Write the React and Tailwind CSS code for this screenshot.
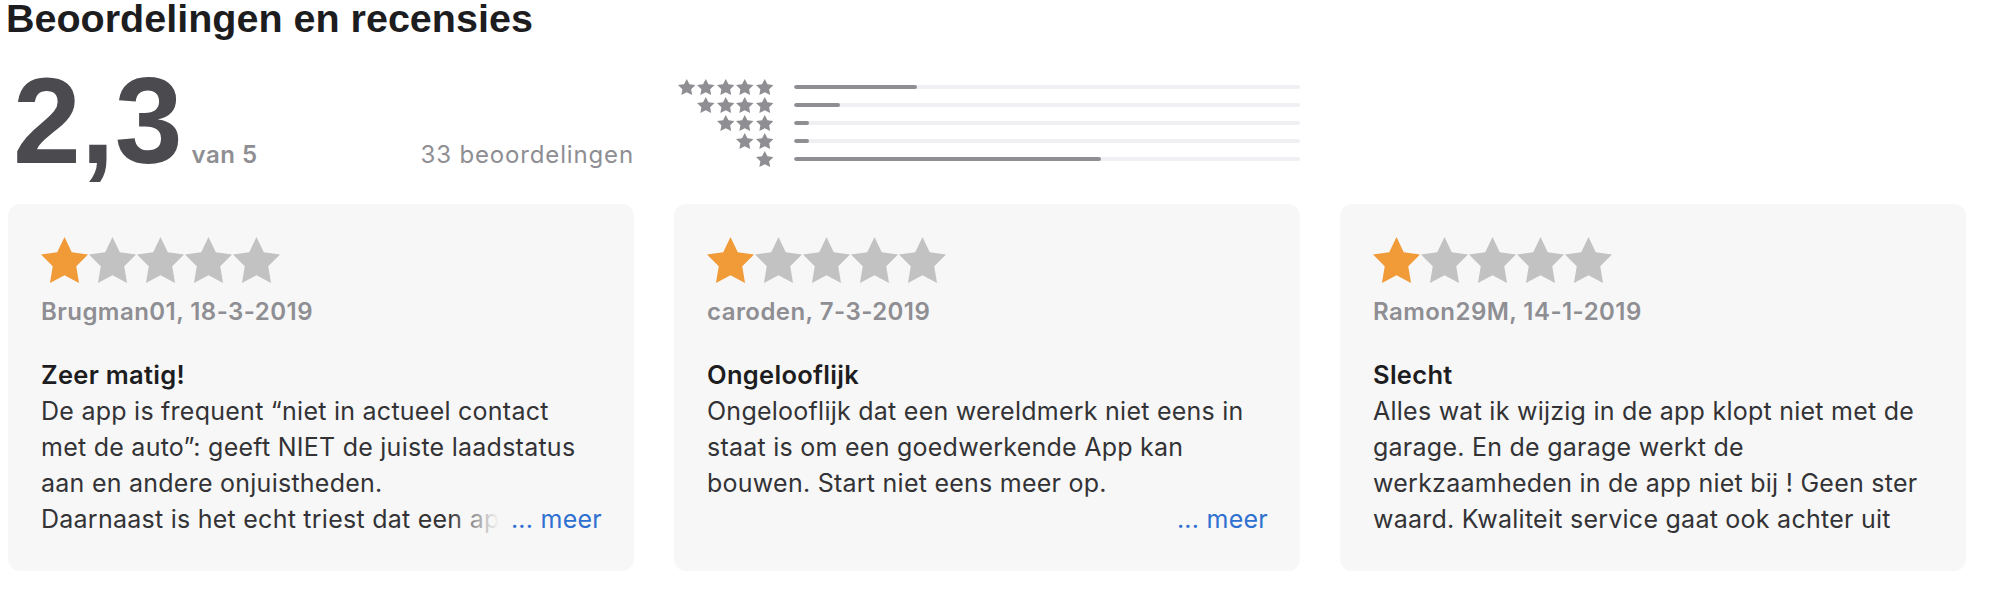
import React from "react";

const STAR = "M12 2l3.09 6.26L22 9.27l-5 4.87 1.18 6.88L12 17.77l-6.18 3.25L7 14.14 2 9.27l6.91-1.01L12 2z";

function Star({ className, color }) {
  return (
    <svg viewBox="2 2 20 19.02" preserveAspectRatio="none" className={className}>
      <path d={STAR} fill={color} />
    </svg>
  );
}

const histogram = [
  { stars: 5, count: 8 },
  { stars: 4, count: 3 },
  { stars: 3, count: 1 },
  { stars: 2, count: 1 },
  { stars: 1, count: 20 },
];

const reviews = [
  {
    author: "Brugman01, 18-3-2019",
    title: "Zeer matig!",
    lines: [
      "De app is frequent “niet in actueel contact",
      "met de auto”: geeft NIET de juiste laadstatus",
      "aan en andere onjuistheden.",
    ],
    last: "Daarnaast is het echt triest dat een app die",
    more: "inline",
  },
  {
    author: "caroden, 7-3-2019",
    title: "Ongelooflijk",
    lines: [
      "Ongelooflijk dat een wereldmerk niet eens in",
      "staat is om een goedwerkende App kan",
      "bouwen. Start niet eens meer op.",
    ],
    more: "below",
  },
  {
    author: "Ramon29M, 14-1-2019",
    title: "Slecht",
    lines: [
      "Alles wat ik wijzig in de app klopt niet met de",
      "garage. En de garage werkt de",
      "werkzaamheden in de app niet bij ! Geen ster",
      "waard. Kwaliteit service gaat ook achter uit",
    ],
  },
];

function ReviewCard({ r }) {
  return (
    <div className="bg-[#f7f7f7] rounded-[12px] h-[367px] pt-[33px] pl-[33px] pr-[32px] pb-[34px] flex flex-col">
      <div className="flex gap-[1px]">
        {[0, 1, 2, 3, 4].map((i) => (
          <Star key={i} className="w-[47px] h-[46px]" color={i === 0 ? "#f19a38" : "#c2c2c2"} />
        ))}
      </div>
      <div className="mt-[13px] text-[24px] leading-[32px] font-semibold text-[#8e8e93] tracking-[0.45px] whitespace-nowrap">
        {r.author}
      </div>
      <div className="mt-[29px] text-[25.5px] leading-[36px] font-semibold text-[#1d1d1f] tracking-[0.3px] whitespace-nowrap">
        {r.title}
      </div>
      <div className="text-[25px] leading-[36px] tracking-[0.25px] text-[#333336]">
        {r.lines.map((l, i) => (
          <div key={i} className="whitespace-nowrap">{l}</div>
        ))}
        {r.more === "inline" && (
          <div className="flex items-baseline">
            <div className="relative flex-1 min-w-0 overflow-hidden whitespace-nowrap">
              {r.last}
              <div className="absolute top-0 right-0 h-full w-[50px] bg-linear-to-r from-[#f7f7f700] to-[#f7f7f7]" />
            </div>
            <span className="ml-[12px] text-[#2f70d0] whitespace-nowrap">... meer</span>
          </div>
        )}
        {r.more === "below" && (
          <div className="flex justify-end">
            <span className="text-[#2f70d0] whitespace-nowrap">... meer</span>
          </div>
        )}
      </div>
    </div>
  );
}

export default function App() {
  const total = histogram.reduce((a, b) => a + b.count, 0);
  return (
    <div className="w-[1990px] h-[590px] bg-white pl-[8px] overflow-hidden font-['Inter',sans-serif]">
      <h2 className="-ml-[2px] text-[39.5px] leading-[36px] font-bold text-[#1d1d1f] font-['Liberation_Sans',Arial,sans-serif]">
        Beoordelingen en recensies
      </h2>
      <div className="mt-[24px] grid grid-cols-[626px_626px_626px] gap-x-[40px]">
        <div className="flex items-baseline justify-between h-[122px]">
          <div className="flex items-baseline">
            <span className="ml-[5px] text-[122px] leading-[122px] font-bold text-[#4a4a4f] tracking-[0px] font-['Liberation_Sans',Arial,sans-serif]">
              2,3
            </span>
            <span className="ml-[9px] text-[24px] font-semibold text-[#8e8e93] tracking-[0.5px]">van 5</span>
          </div>
          <span className="text-[24px] text-[#8e8e93] tracking-[0.85px]">33 beoordelingen</span>
        </div>
        <div className="pt-[18px] flex flex-col">
          {histogram.map((h) => (
            <div key={h.stars} className="flex items-center h-[18px]">
              <div className="w-[99px] flex justify-end gap-[2px]">
                {Array.from({ length: h.stars }).map((_, i) => (
                  <Star key={i} className="w-[17.5px] h-[16px]" color="#8e8e93" />
                ))}
              </div>
              <div className="ml-[21px] flex-1 h-[4px] rounded-full bg-[#efeff4] overflow-hidden">
                <div
                  className="h-full rounded-full bg-[#8e8e93]"
                  style={{ width: `${(h.count / total) * 100}%` }}
                />
              </div>
            </div>
          ))}
        </div>
        <div />
      </div>
      <div className="mt-[22px] grid grid-cols-[626px_626px_626px] gap-x-[40px]">
        {reviews.map((r, i) => (
          <ReviewCard key={i} r={r} />
        ))}
      </div>
    </div>
  );
}
